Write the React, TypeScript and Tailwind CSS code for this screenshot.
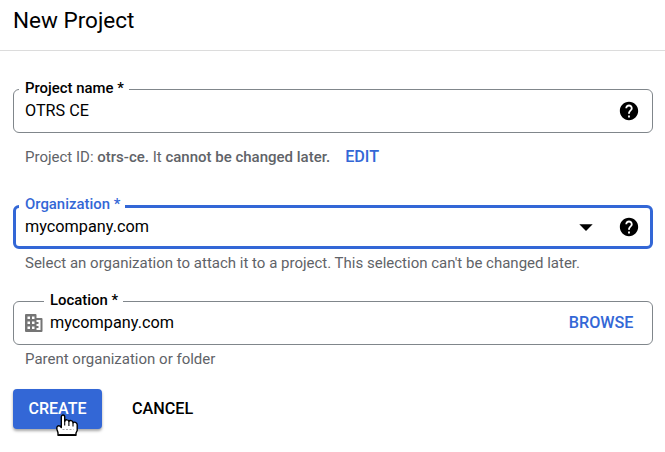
import React from "react";
import clsx from "clsx";
import { MdArrowDropDown, MdHelp } from "react-icons/md";

type FieldProps = {
  label: string;
  active?: boolean;
  labelClassName?: string;
  children: React.ReactNode;
};

function Field({ label, active, labelClassName, children }: FieldProps) {
  return (
    <div
      className={clsx(
        "relative flex h-11 items-center rounded-[6px]",
        active
          ? "border-3 border-[#3367d6] pl-[9px] pr-[10.5px]"
          : "border border-[#80868b] pl-[11px] pr-[12.5px]"
      )}
    >
      {/* Label sits over the top border */}
      <span
        className={clsx(
          "absolute bg-white pl-1.5 pr-[5px] text-[14.9px] leading-4 font-medium whitespace-nowrap",
          active ? "-top-3 text-[#3367d6]" : "-top-[10px] text-black",
          labelClassName
        )}
      >
        {label}
      </span>
      {children}
    </div>
  );
}

function Building() {
  return (
    <svg className="mr-[7px] h-[18px] w-[18px]" viewBox="0 0 18 18" fill="#757575">
      <path
        fillRule="evenodd"
        d="M1 0H10.5Q11.5 0 11.5 1V4H16.5Q17.5 4 17.5 5V17Q17.5 18 16.5 18H1Q0 18 0 17V1Q0 0 1 0ZM2.5 2.5V5H5V2.5ZM7 2.5V5H9.5V2.5ZM2.5 7.5V10H5V7.5ZM7 7.5V10H9.5V7.5ZM2.5 12.5V15H5V12.5ZM7 12.5V15H9.5V12.5ZM11.5 6V8H13.5V10H11.5V12H13.5V14H11.5V16H15.5V6Z"
      />
    </svg>
  );
}

function Pointer() {
  return (
    <svg
      className="absolute left-[43px] top-[25px] h-[23px] w-[23px]"
      viewBox="0 0 23 23"
      fill="white"
      stroke="black"
      strokeWidth="1.4"
      strokeLinejoin="round"
    >
      <path d="M5.3 11.7V3C5.3.3 8.7.3 8.7 3V7.3C9.2 5.2 12.8 5.4 12.9 7.5 13.6 5.9 17 6.5 17 8.7 18 7.5 21.2 8.2 21.2 10.7V16.5L20 19V21.3H2V18.8L1 15.5C.2 12.2 2.2 11 4.2 12.2L5.3 13.5Z" />
      <path d="M8.7 6.5V11.5M12.9 7.5V12M17 8.7V12.5" fill="none" strokeWidth="1.1" />
      <path d="M6.5 15.5H17.5" fill="none" stroke="#aaa" strokeWidth="1" strokeDasharray="2 1.5" />
      <path d="M2.3 21H19.8" strokeWidth="1.8" />
    </svg>
  );
}

export default function App() {
  return (
    <div className="h-[452px] w-[665px] overflow-hidden bg-white font-['Roboto',sans-serif] text-black">
      <header className="flex h-[51px] items-start border-b border-[#dcdcdc] pl-[13px] pt-[6px]">
        <h1 className="text-[22.5px] leading-7">New Project</h1>
      </header>

      <main className="pl-[13px] pr-3 pt-[38px]">
        <Field label="Project name *" labelClassName="left-[5px]">
          <span className="flex-1 text-[16.2px]">OTRS CE</span>
          <MdHelp className="size-[22px]" />
        </Field>
        <div className="mt-[14px] flex h-5 items-center pl-3 text-[15px] text-[#5f6368]">
          <p>
            Project ID: <b className="font-medium">otrs-ce.</b> It{" "}
            <b className="font-medium">cannot be changed later.</b>
          </p>
          <button className="ml-[15px] text-[16.2px] font-medium text-[#3367d6]">EDIT</button>
        </div>

        <div className="mt-[38px]">
          <Field label="Organization *" active labelClassName="left-[3px]">
            <span className="flex-1 text-[16.25px]">mycompany.com</span>
            <MdArrowDropDown className="mr-4 size-8" />
            <MdHelp className="size-[22px]" />
          </Field>
        </div>
        <p className="mt-1 pl-3 text-[15px] leading-5 text-[#5f6368]">
          Select an organization to attach it to a project. This selection can't be changed later.
        </p>

        <div className="mt-7">
          <Field label="Location *" labelClassName="left-[30px]">
            <Building />
            <span className="flex-1 text-[16.25px]">mycompany.com</span>
            <button className="mr-[6px] text-[16.2px] font-medium text-[#3367d6]">BROWSE</button>
          </Field>
        </div>
        <p className="mt-1 pl-3 text-[15px] leading-5 text-[#5f6368]">Parent organization or folder</p>

        <div className="mt-5 flex h-10 items-center">
          <div className="relative">
            <button className="h-10 w-[89px] rounded bg-[#3367d6] text-base font-medium text-white shadow-[0_2px_3px_rgba(0,0,0,0.35)]">
              CREATE
            </button>
            <Pointer />
          </div>
          <button className="ml-[30px] text-[16.2px] font-medium">CANCEL</button>
        </div>
      </main>
    </div>
  );
}
